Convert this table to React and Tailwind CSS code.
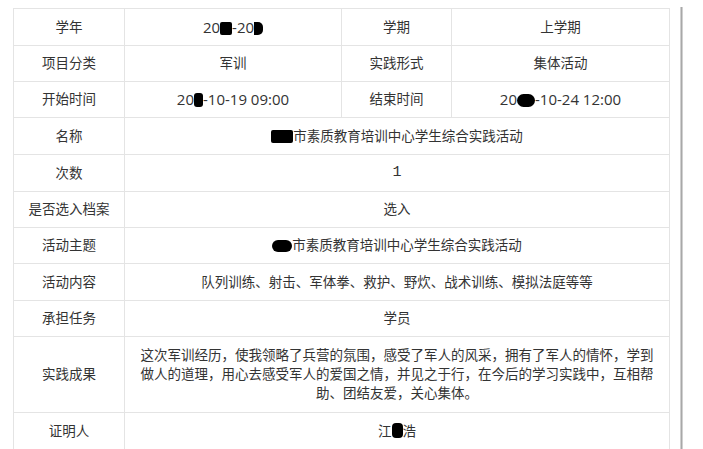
const Blot = ({ className }) => (
  <span className={`inline-block bg-black align-[-2px] ${className}`} />
);

const Label = ({ children }) => (
  <div className="flex items-center justify-center border-r border-b border-[#e4e4e4]">{children}</div>
);

const Value = ({ children, wide }) => (
  <div
    className={`flex items-center justify-center border-r border-b border-[#e4e4e4] ${wide ? 'col-span-3' : ''}`}
  >
    {children}
  </div>
);

const App = () => {
  return (
    <div className="w-[703px] h-[449px] overflow-hidden bg-white flex pl-[13px] pt-[8px] text-[13.5px] text-[#333] font-['Open_Sans','Noto_Sans_CJK_SC',sans-serif]">
      <div className="grid grid-cols-[111px_217px_110px_218px] grid-rows-[37px_36px_36px_37px_37px_36px_36px_37px_36px_76px_37px] border-t border-l border-[#e4e4e4] self-start">
        <Label>学年</Label>
        <Value>
          <span className="text-[15px]">
            20<Blot className="w-[12px] h-[13px] rounded-[2px]" />-20<Blot className="w-[9px] h-[13px] rounded-r-[5px]" />
          </span>
        </Value>
        <Label>学期</Label>
        <Value>上学期</Value>

        <Label>项目分类</Label>
        <Value>军训</Value>
        <Label>实践形式</Label>
        <Value>集体活动</Value>

        <Label>开始时间</Label>
        <Value>
          <span className="text-[15px]">
            20<Blot className="w-[9px] h-[14px] rounded-[3px]" />-10-19 09:00
          </span>
        </Value>
        <Label>结束时间</Label>
        <Value>
          <span className="text-[15px]">
            20<Blot className="w-[18px] h-[13px] rounded-full" />-10-24 12:00
          </span>
        </Value>

        <Label>名称</Label>
        <Value wide>
          <span>
            <Blot className="w-[22px] h-[13px] rounded-[2px]" />市素质教育培训中心学生综合实践活动
          </span>
        </Value>

        <Label>次数</Label>
        <Value wide>
          <span className="font-['Liberation_Mono',monospace] text-[15px]">1</span>
        </Value>

        <Label>是否选入档案</Label>
        <Value wide>选入</Value>

        <Label>活动主题</Label>
        <Value wide>
          <span>
            <Blot className="w-[20px] h-[12px] rounded-full" />市素质教育培训中心学生综合实践活动
          </span>
        </Value>

        <Label>活动内容</Label>
        <Value wide>队列训练、射击、军体拳、救护、野炊、战术训练、模拟法庭等等</Value>

        <Label>承担任务</Label>
        <Value wide>学员</Value>

        <Label>实践成果</Label>
        <Value wide>
          <p className="px-[10px] text-center leading-[19px]">
            这次军训经历，使我领略了兵营的氛围，感受了军人的风采，拥有了军人的情怀，学到做人的道理，用心去感受军人的爱国之情，并见之于行，在今后的学习实践中，互相帮助、团结友爱，关心集体。
          </p>
        </Value>

        <Label>证明人</Label>
        <Value wide>
          <span>
            江<Blot className="w-[11px] h-[15px] rounded-[4px]" />浩
          </span>
        </Value>
      </div>
      <div className="ml-[10px] mt-[-1px] w-[3px] h-[460px] bg-[#a8a8a8] border-x border-[#d0d0d0]" />
    </div>
  );
};

export default App;
